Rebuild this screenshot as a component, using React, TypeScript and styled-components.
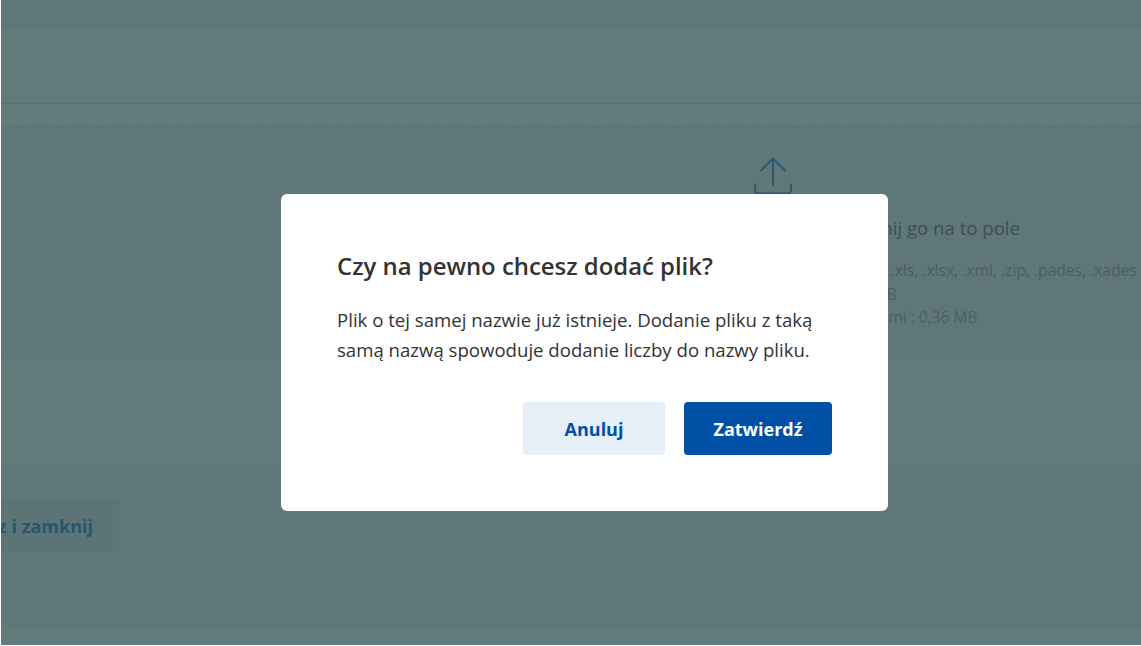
import React from "react";
import styled, { createGlobalStyle } from "styled-components";

const GlobalStyle = createGlobalStyle`
  html, body {
    margin: 0;
    padding: 0;
    background: #fff;
    overflow: hidden;
  }
  body {
    font-family: "Open Sans", "Liberation Sans", sans-serif;
  }
`;

const Page = styled.div`
  position: relative;
  width: 1140px;
  height: 645px;
  margin-left: 1px;
  overflow: hidden;
  display: flex;
  flex-direction: column;
`;

const Header = styled.div`
  height: 103px;
  flex: none;
  background: linear-gradient(#5f7778 0 27px, #637a7b 27px);
  border-bottom: 1px solid #5a7173;
`;

const UploadSection = styled.div`
  height: 360px;
  flex: none;
  padding-top: 23px;
  background: #637a7b;
  box-sizing: border-box;
`;

const DropZone = styled.div`
  height: 232px;
  box-sizing: border-box;
  background: #5f7778;
  border-top: 1px dashed #5a7276;
  border-bottom: 1px dashed #5a7276;
  display: flex;
  flex-direction: column;
  align-items: center;
  padding: 29px 0 0 406px;
`;

const UploadIcon = styled.svg`
  width: 40px;
  height: 38px;
  flex: none;
  color: #285a73;
`;

const DropLabel = styled.div`
  margin-top: 19px;
  font-size: 18.6px;
  line-height: 28px;
  color: #3c5053;
  white-space: nowrap;
`;

const Hints = styled.div`
  align-self: flex-start;
  margin: 17px 0 0 211px;
  font-size: 15.6px;
  line-height: 23.5px;
  color: #4a6062;
  white-space: nowrap;
`;

const Footer = styled.div`
  height: 162px;
  flex: none;
  background: #5f7778;
  padding-top: 35px;
  box-sizing: border-box;
`;

const FooterClip = styled.div`
  width: 118px;
  display: flex;
  justify-content: flex-end;
`;

const SaveButton = styled.div`
  flex: none;
  height: 53px;
  padding: 0 26px;
  display: flex;
  align-items: center;
  border-radius: 4px;
  background: #5c7476;
  color: #275770;
  font-size: 18px;
  font-weight: 700;
  white-space: nowrap;
`;

const BottomBand = styled.div`
  flex: 1;
  background: #637a7b;
`;

const Modal = styled.div`
  position: absolute;
  left: 280px;
  top: 194px;
  width: 607px;
  height: 317px;
  box-sizing: border-box;
  padding: 54px 56px 0;
  background: #fff;
  border-radius: 6px;
`;

const Title = styled.h2`
  margin: 0;
  font-size: 23.9px;
  line-height: 36px;
  font-weight: 600;
  color: #333;
`;

const Body = styled.p`
  margin: 21px 0 0;
  font-size: 18.6px;
  line-height: 30px;
  color: #333;
`;

const Actions = styled.div`
  margin-top: 37px;
  display: flex;
  justify-content: flex-end;
  gap: 19px;
`;

const Button = styled.button<{ $primary?: boolean }>`
  height: 53px;
  width: ${(p) => (p.$primary ? "148px" : "142px")};
  border: 0;
  border-radius: 4px;
  padding: 0;
  font-family: inherit;
  font-size: 18px;
  font-weight: 700;
  background: ${(p) => (p.$primary ? "#0050a5" : "#e6eef7")};
  color: ${(p) => (p.$primary ? "#fff" : "#0050a5")};
`;

export default function App() {
  return (
    <>
      <GlobalStyle />
      <Page>
        <Header />
        <UploadSection>
          <DropZone>
            <UploadIcon viewBox="0 0 40 38" fill="none" stroke="currentColor" strokeWidth="2" strokeLinecap="round" strokeLinejoin="round">
              <path d="M19 1.5V28M7 13.5L19 1.5L31 13.5" />
              <path d="M1 27.5V33a3.5 3.5 0 0 0 3.5 3.5h29a3.5 3.5 0 0 0 3.5-3.5V27.5" />
            </UploadIcon>
            <DropLabel>Wybierz plik ze swego dysku lub przeciągnij go na to pole</DropLabel>
            <Hints>
              <div>Dozwolone formaty: .pdf, .doc, .docx, .xls, .xlsx, .xml, .zip, .pades, .xades</div>
              <div>Maksymalny rozmiar załącznika 10 MB</div>
              <div>Całkowity rozmiar plików z załącznikami : 0,36 MB</div>
            </Hints>
          </DropZone>
        </UploadSection>
        <Footer>
          <FooterClip>
            <SaveButton>Zapisz i zamknij</SaveButton>
          </FooterClip>
        </Footer>
        <BottomBand />
        <Modal>
          <Title>Czy na pewno chcesz dodać plik?</Title>
          <Body>
            Plik o tej samej nazwie już istnieje. Dodanie pliku z taką
            <br />
            samą nazwą spowoduje dodanie liczby do nazwy pliku.
          </Body>
          <Actions>
            <Button>Anuluj</Button>
            <Button $primary>Zatwierdź</Button>
          </Actions>
        </Modal>
      </Page>
    </>
  );
}
